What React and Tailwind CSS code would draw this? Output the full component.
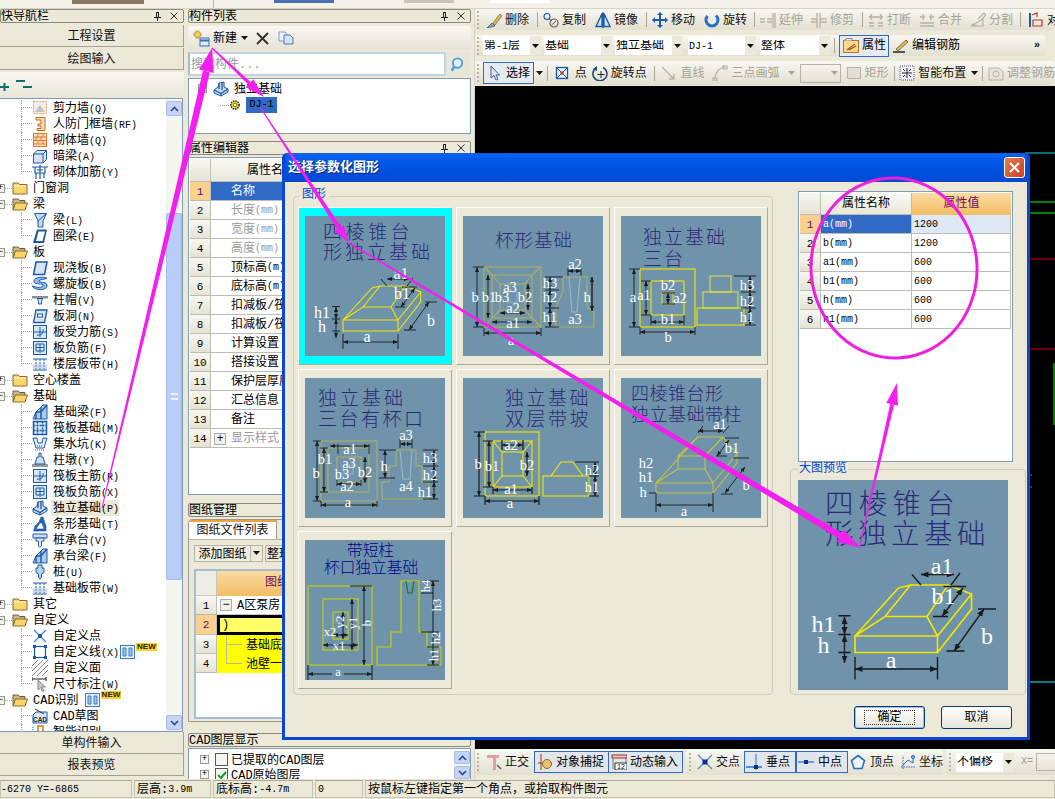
const BL = '#1c5aa6';
const GR = '#b5b3a6';

const ICONS = {
  shear: <><rect x="1.5" y="1.5" width="13" height="12" fill="#f4ede6" stroke="#dba474" strokeDasharray="2 1" /><path d="M3 12 L8 5 L13 12Z" fill="#c4c4c4" /></>,
  renfang: <path d="M4 1.5h9v13H5v-2h4v-2.5H6V8h3V4H4z" fill="#f8dcb4" stroke="#c46a1f" />,
  brick: <><rect x="1.5" y="1.5" width="13" height="13" fill="#f9dcc0" stroke="#e07b30" /><path d="M1.5 5H14.5M1.5 8.5H14.5M1.5 12H14.5M6 1.5V5M11 1.5V5M4 5V8.5M9 5V8.5M6 8.5V12M11 8.5V12" stroke="#e07b30" /></>,
  anliang: <><path d="M1.5 6 L5 2.5 H14.5 V11.5 L11 15 H1.5Z" fill="#d5e3f2" stroke={BL} /><path d="M1.5 6H11V15M11 6L14.5 2.5" stroke={BL} /></>,
  jiajin: <path d="M0 3H16M8 1V15M3 3V9H13V3M4 9V15M12 9V14M5 6H11" stroke={BL} strokeWidth="1.2" />,
  liang: <><path d="M2.5 1.5H14.5L11 9V15H6V9Z" fill="#c3d9f0" stroke={BL} /><path d="M6 9 L14 2" stroke={BL} /></>,
  quan: <path d="M5 1.5H15L12 15H1ZM6.5 3.5L4 13H10.5L13 3.5Z" fill={BL} fillRule="evenodd" />,
  xian: <path d="M4 2H15L12.5 14.5H1.5Z" fill="#d7e5f6" stroke={BL} strokeWidth="1.5" />,
  spiral: <path d="M15 2C8 0 1 2 2 6C3 9 11 7 11 9C11 12 5 12 0 10C3 15 16 15 15 9C14 5 6 7 7 5C8 3 12 4 15 2Z" fill="#8cbaec" stroke={BL} />,
  zhumao: <><path d="M0 4H16V6.5H0Z" fill="#8d8d8d" /><path d="M5.5 6.5H10.5L9.5 9.5V12H6.5V9.5Z" fill="#cfe0f5" stroke={BL} /></>,
  bandong: <><path d="M4 2H15L12.5 14.5H1.5Z" fill="#d7e5f6" stroke={BL} strokeWidth="1.3" /><rect x="5.5" y="6" width="5" height="3" fill="#fff" stroke={BL} /></>,
  bshou: <><rect x="1.5" y="1.5" width="13" height="13" fill="#d9e6f6" stroke={BL} /><path d="M2 8H14M8 3V13M11 5C12 9 9 12 5 11" stroke={BL} /></>,
  bfu: <><rect x="1.5" y="1.5" width="13" height="13" fill="#d9e6f6" stroke={BL} /><path d="M4 4H12V11H4ZM4 7.5H12M8 4V13" stroke={BL} /></>,
  band: <><path d="M1 3H15M1 14H15" stroke={BL} /><path d="M4 3V14M8 3V14M12 3V14" stroke={BL} strokeDasharray="2 1" /><rect x="1" y="8" width="14" height="6" fill="#9fb7d6" opacity=".5" /></>,
  jcliang: <><path d="M1 15 L4 8 L11 1 H15 V15Z" fill="#a9c8ea" stroke={BL} /><path d="M4 8V15M9 8V15M4 8H9L15 1M9 3V8" stroke={BL} strokeWidth="1.4" /></>,
  fabanji: <><rect x="1.5" y="1.5" width="13" height="13" fill="#d9e6f6" stroke={BL} strokeWidth="1.5" /><path d="M5.5 1.5V14.5M10.5 1.5V14.5M1.5 5.5H14.5M1.5 10.5H14.5" stroke={BL} strokeWidth="1.5" strokeDasharray="2 1" /></>,
  jishui: <><path d="M1 2H5L6 7H10L11 2H15L12 12H4Z" fill="#e3edf8" stroke={BL} /><path d="M3 14H13M5 10H11" stroke={BL} strokeDasharray="1 1" /></>,
  zhudun: <><path d="M0 12H16V15H0Z" fill="#999" /><path d="M7 1H9V5H11L13 12H3L5 5H7Z" fill="#cfe0f5" stroke={BL} /></>,
  duli: <><path d="M1 9L5 6L6 2L11 1L11 6L15 8V11L8 15L1 12Z" fill="#c5d9ef" stroke={BL} /><path d="M1 9L8 12.5L15 8M8 12.5V15M6 2V8M9 1.5V9" stroke={BL} strokeWidth="1.3" /></>,
  tiao: <path d="M1.5 15 L3 10 L7 6 L9 1 H11 L14 10 V15ZM4 13H12L10 7H8Z" fill="#2a66b0" fillRule="evenodd" stroke={BL} strokeWidth=".6" />,
  chengtai: <><path d="M1 2H15V6H1Z" fill="#cfe0f5" stroke={BL} /><path d="M4 6H12V9H9.5V14L8 15.5L6.5 14V9H4Z" fill="#e6eef8" stroke={BL} /></>,
  zhuang: <path d="M6 1H10V4H12V8.5L9.5 10V13L8 15L6.5 13V10L4 8.5V4H6Z" fill="#b6d0ee" stroke={BL} />,
  zpoint: <><path d="M2 2L14 14M14 2L2 14" stroke="#3c7fc9" strokeWidth="1.2" /><rect x="6" y="6" width="4" height="4" fill={BL} /></>,
  zline: <><rect x="2.5" y="2.5" width="11" height="11" stroke={BL} strokeWidth="1.2" /><path d="M1 1h3v3H1zM12 1h3v3h-3zM1 12h3v3H1zM12 12h3v3h-3z" fill={BL} /></>,
  zface: <path d="M0 6L6 0M0 11L11 0M0 16L16 0M5 16L16 5M10 16L16 10" stroke="#8a8a8a" />,
  zdim: <><path d="M0 3H14M0 1V5M14 1V5" stroke="#222" /><path d="M6 4V14L8.5 11.5L10.5 15.5L12 15L10 11H13.5Z" fill="#c9c9c9" stroke="#888" /></>,
  cad: <><path d="M1 15V7L4 4H15V15Z" fill="#dbe6f2" stroke={BL} /><path d="M3 1L12 6" stroke="#333" /><text x="8" y="13.5" fontSize="6.5" fontWeight="700" textAnchor="middle" fill="#222" fontFamily="Liberation Sans">CAD</text></>,
  smart: <><path d="M1 3V14" stroke={BL} strokeDasharray="1 1" /><path d="M5 7V14H12V7M6 2H11V8H6Z" stroke="#d27a1f" strokeWidth="1.5" /></>,
  gear: <><circle cx="8" cy="8" r="5.5" fill="#f5e33b" stroke="#222" strokeDasharray="2 1.2" strokeWidth="2" /><circle cx="8" cy="8" r="2.5" fill="#fff8a0" stroke="#444" /></>,
  search: <><circle cx="7" cy="6.5" r="5" fill="#dcefff" stroke="#4f9be0" strokeWidth="2" /><path d="M3.5 10.5L0.5 14.5" stroke="#4f9be0" strokeWidth="3" /></>,
  del: <><path d="M1 16 L6 11 L9 14Z" fill="#7fa8d8" stroke="#333" strokeWidth=".6" /><path d="M7 11 L14 2 L16 4 L9 13Z" fill="#e8b64a" stroke="#555" strokeWidth=".6" /></>,
  copyc: <><circle cx="4" cy="4.5" r="3" stroke={BL} strokeWidth="1.1" /><circle cx="11" cy="11" r="4" stroke="#555" strokeWidth="1.1" /><path d="M6 7L9 9M8.5 13L13 9" stroke="#555" /></>,
  mirror: <path d="M7 1.5L1 14.5H7ZM9 1.5L15 14.5H9ZM8 0V16" stroke={BL} strokeWidth="1.3" fill="#cfe0f5" />,
  move: <path d="M8 0L11 3H9V7H13V5L16 8L13 11V9H9V13H11L8 16L5 13H7V9H3V11L0 8L3 5V7H7V3H5Z" fill={BL} />,
  rotate: <path d="M12 3.5A6 6 0 1 1 3.5 4" stroke="#2a6fc4" strokeWidth="3" />,
  extend: <path d="M0 7H5M0 10H5M7 7H12M7 10H12M13 1V16M15 1V16" stroke={GR} strokeWidth="1.3" />,
  trim: <path d="M0 7H6M0 10H6M9 7H16M9 10H16M6 1V16M9 1V16" stroke={GR} strokeWidth="1.3" />,
  breakk: <path d="M1 11H6M1 14H6M10 11H15M10 14H15M1 5H15M4 2L2 5L4 8M12 2L14 5L12 8" stroke={GR} strokeWidth="1.3" />,
  merge: <path d="M1 11H15M1 14H15M1 5H6M10 5H15M4 2V8M12 2V8" stroke={GR} strokeWidth="1.3" />,
  split: <path d="M1 14H13L13 7L1 14ZM8 7L14 1L16 3L10 9M2 12L8 14" stroke={GR} strokeWidth="1.2" />,
  align: <><path d="M2 1V15" stroke={BL} strokeWidth="2" /><path d="M4 3L9 1V5M5 8H14V14H5Z" stroke="#c0392b" strokeWidth="1.2" /></>,
  attr: <><rect x="0.5" y="2.5" width="15" height="12" fill="#f9d88f" stroke="#b8752a" /><path d="M1 2.5L4 0.5H9V2.5" fill="#eee" stroke="#888" /><path d="M4 12L12 6M6 12L13 8" stroke="#a0622a" strokeWidth="1.4" /></>,
  rebar: <><path d="M0 14H12" stroke="#222" strokeWidth="1.5" /><path d="M3 11L13 2L15 4L5 13Z" fill="#e8b64a" stroke="#333" strokeWidth=".6" /></>,
  pointer: <path d="M4 1V13L7 10.5L9 15L11 14L9 10H12.5Z" fill="#dce6f3" stroke="#44648c" />,
  point: <><rect x="2.5" y="2.5" width="11" height="11" fill="#e8eef8" stroke={BL} strokeWidth="1.3" /><path d="M3 3L13 13M13 3L3 13" stroke={BL} /><rect x="6.5" y="6.5" width="3" height="3" fill="#d02a2a" /></>,
  rotpoint: <><path d="M4 3A7 7 0 1 0 11 2.5" stroke="#234a7c" strokeWidth="1.6" /><path d="M1 4L5 1V6Z" fill="#234a7c" /><path d="M9 6V13M5.5 9.5H12.5" stroke="#222" /></>,
  gline: <path d="M1 2L13 14M13 9V14H8" stroke={GR} strokeWidth="1.3" />,
  garc: <path d="M3 15C3 8 6 3 13 2M11 1H15V4H11ZM1 13H5V16H1Z" stroke={GR} strokeWidth="1.2" />,
  grect: <rect x="1.5" y="2.5" width="13" height="11" fill="#e2e0d4" stroke={GR} />,
  layout: <><rect x="1" y="1" width="14" height="14" fill="#eef" stroke="#556" strokeDasharray="1 1" /><path d="M8 3V13M3 8H13M4 4L6 6M12 4L10 6M4 12L6 10M12 12L10 10" stroke="#222" /></>,
  adjust: <><path d="M1 3H11L15 7V15H1Z" fill="#e6e4da" stroke={GR} /><circle cx="8" cy="9" r="3" stroke={GR} /></>,
  ortho: <><path d="M1 1H13V4H10V16H7V4H1Z" fill="#dca0a0" /><path d="M11 11L15 15" stroke="#556" strokeWidth="1.5" /></>,
  snap: <><path d="M4 0V16M1 9H15" stroke="#a2331e" /><circle cx="10" cy="10" r="4.5" fill="#e8c36e" stroke="#8a6d2a" /></>,
  dyn: <><rect x="1" y="1" width="15" height="3" fill="#d8d4c4" stroke="#a2331e" /><path d="M2 4V15M15 4V15" stroke="#777" /><rect x="4" y="9" width="12" height="7" fill="#fff" stroke="#333" /><text x="10" y="15" fontSize="6.5" textAnchor="middle" fill="#111" fontFamily="Liberation Mono">12</text></>,
  cross: <><path d="M1 1L15 15M15 1L1 15" stroke="#4f8fd8" strokeWidth="1.3" /><rect x="5.5" y="5.5" width="5" height="5" fill="#0c2f8c" /></>,
  perp: <><path d="M0 13H16" stroke="#4f8fd8" strokeWidth="2" /><path d="M10 0V16" stroke="#4f8fd8" strokeWidth="1.3" /><rect x="8" y="11" width="4" height="4" fill="#0c2f8c" /></>,
  mid: <><path d="M0 8H16" stroke="#6f9bd4" strokeWidth="2" /><rect x="6" y="6" width="4" height="4" fill="#0c2f8c" /></>,
  vert: <path d="M8 1.5L14.5 6.5L12 14.5H4L1.5 6.5Z" fill="#eef4fc" stroke="#2a6fc4" strokeWidth="1.6" />,
  coord: <><path d="M1 13H15M3 15V2" stroke="#2a6fc4" strokeDasharray="1.5 1" /><path d="M2 12L8 6L13 9V2" stroke="#2a6fc4" /><circle cx="13" cy="3" r="1.6" stroke="#2a6fc4" /></>,
};

const FolderIcon = ({ open }) => (
  <svg viewBox="0 0 16 14" width="16" height="14" className="shrink-0">
    {open ? (
      <>
        <path d="M1 2H6L7.5 3.5H13V12H1Z" fill="#c9b68a" stroke="#6d5c36" />
        <path d="M1 13L3.5 6H15.5L13 13Z" fill="#f7d36c" stroke="#8a6d2a" />
      </>
    ) : (
      <>
        <path d="M1 2H6L7.5 3.5H15V13H1Z" fill="#f7d66e" stroke="#8a6d2a" />
        <path d="M2 5H14" stroke="#fff3c0" />
      </>
    )}
  </svg>
);

const Ic = ({ n, s = 16 }) => (
  <svg viewBox="0 0 16 16" width={s} height={s} fill="none" className="shrink-0">
    {ICONS[n]}
  </svg>
);

const NewBadge = () => (
  <>
    <svg viewBox="0 0 15 14" width="15" height="14" className="shrink-0 ml-[1px]">
      <rect x="0.5" y="0.5" width="14" height="13" fill="#e6f0fb" stroke="#3d7cc9" />
      <path d="M3 3H6V11H3ZM9 3H12V11H9Z" stroke="#3d7cc9" fill="#9cc3ee" />
    </svg>
    <span className="self-start ml-[1px] mt-[-1px] bg-[#ffd21e] px-[1px] text-[8px] leading-[8px] font-bold text-[#222] font-['Liberation_Sans',sans-serif]">NEW</span>
  </>
);

const TREE = [
  { i: 'shear', t: '剪力墙', l: '(Q)' },
  { i: 'renfang', t: '人防门框墙', l: '(RF)' },
  { i: 'brick', t: '砌体墙', l: '(Q)' },
  { i: 'anliang', t: '暗梁', l: '(A)' },
  { i: 'jiajin', t: '砌体加筋', l: '(Y)', last: true },
  { root: true, t: '门窗洞' },
  { root: true, open: true, t: '梁' },
  { i: 'liang', t: '梁', l: '(L)' },
  { i: 'quan', t: '圈梁', l: '(E)', last: true },
  { root: true, open: true, t: '板' },
  { i: 'xian', t: '现浇板', l: '(B)' },
  { i: 'spiral', t: '螺旋板', l: '(B)' },
  { i: 'zhumao', t: '柱帽', l: '(V)' },
  { i: 'bandong', t: '板洞', l: '(N)' },
  { i: 'bshou', t: '板受力筋', l: '(S)' },
  { i: 'bfu', t: '板负筋', l: '(F)' },
  { i: 'band', t: '楼层板带', l: '(H)', last: true },
  { root: true, t: '空心楼盖' },
  { root: true, open: true, t: '基础' },
  { i: 'jcliang', t: '基础梁', l: '(F)' },
  { i: 'fabanji', t: '筏板基础', l: '(M)' },
  { i: 'jishui', t: '集水坑', l: '(K)' },
  { i: 'zhudun', t: '柱墩', l: '(Y)' },
  { i: 'bshou', t: '筏板主筋', l: '(R)' },
  { i: 'bfu', t: '筏板负筋', l: '(X)' },
  { i: 'duli', t: '独立基础', l: '(P)', sel: true },
  { i: 'tiao', t: '条形基础', l: '(T)' },
  { i: 'chengtai', t: '桩承台', l: '(V)' },
  { i: 'jcliang', t: '承台梁', l: '(F)' },
  { i: 'zhuang', t: '桩', l: '(U)' },
  { i: 'band', t: '基础板带', l: '(W)', last: true },
  { root: true, t: '其它' },
  { root: true, open: true, t: '自定义' },
  { i: 'zpoint', t: '自定义点' },
  { i: 'zline', t: '自定义线', l: '(X)', badge: true },
  { i: 'zface', t: '自定义面' },
  { i: 'zdim', t: '尺寸标注', l: '(W)', last: true },
  { root: true, open: true, t: 'CAD识别', badge: true },
  { i: 'cad', t: 'CAD草图' },
  { i: 'smart', t: '智能识别' },
];

const L = ({ children }) => <span className="text-[10px]">{children}</span>;

const PlusBox = ({ open, className = '' }) => (
  <span className={`flex items-center justify-center w-[9px] h-[9px] border border-[#9a9a8c] bg-[#f5f4ee] text-[9px] leading-none shrink-0 ${className}`}>
    {open ? '−' : '+'}
  </span>
);

const TreeRow = ({ row }) => {
  if (row.root) {
    return (
      <div className="flex items-center h-4">
        <PlusBox open={row.open} className="ml-[-4px]" />
        <span className="w-[7px] border-b border-dotted border-gray-400" />
        <FolderIcon open={row.open} />
        <span className="ml-[5px] whitespace-nowrap translate-y-px">{row.t}</span>
        {row.badge && <span className="ml-[5px] flex h-4 items-center"><NewBadge /></span>}
      </div>
    );
  }
  return (
    <div className="flex items-center h-4">
      <div className="w-[21px] shrink-0" />
      <div className="w-[11px] h-4 shrink-0 border-dotted border-gray-400">
        <div className="h-2 border-l border-b border-dotted border-gray-400" />
        {!row.last && <div className="h-2 border-l border-dotted border-gray-400" />}
      </div>
      <Ic n={row.i} />
      <span className={`ml-[3px] pl-[2px] h-4 leading-[18px] whitespace-nowrap ${row.sel ? 'bg-[#ece9d8]' : ''}`}>
        {row.t}<L>{row.l}</L>
      </span>
      {row.badge && <NewBadge />}
    </div>
  );
};

const PanelHead = ({ title, close = true }) => (
  <div className="flex items-center h-[14px] border border-[#8b8a7c] rounded-[2px] leading-[12px] overflow-hidden">
    <span className="flex-1 whitespace-nowrap translate-y-px">{title}</span>
    {close && (
      <span className="flex items-center gap-[8px] pr-[5px]">
        <svg viewBox="0 0 8 9" width="8" height="9"><path d="M2 0V5H0V6H3V9H4V6H7V5H5V0ZM3 1H4V5H3Z" fill="#222" /></svg>
        <svg viewBox="0 0 8 8" width="8" height="8"><path d="M0.5 0.5L7.5 7.5M7.5 0.5L0.5 7.5" stroke="#333" /></svg>
      </span>
    )}
  </div>
);

const NavBtn = ({ children }) => (
  <button className="flex items-center justify-center w-full h-[22px] pt-[3px] bg-[#ece9d8] border-b border-r border-[#a5a294] text-[#111]">
    {children}
  </button>
);

const Caret = ({ c = '#111' }) => (
  <svg viewBox="0 0 7 4" width="7" height="4" className="shrink-0"><path d="M0 0H7L3.5 4Z" fill={c} /></svg>
);

const Grip = () => (
  <span className="flex flex-col gap-[2px] w-[2px] mr-[5px] shrink-0">
    {[0, 1, 2, 3, 4].map((i) => <span key={i} className="w-[2px] h-[2px] bg-[#b8b5a5]" />)}
  </span>
);

const Sep = () => <span className="w-px h-[15px] ml-px mr-[5px] bg-[#aca899] shrink-0" />;

const Tool = ({ icon, label, className = '', off }) => (
  <span className={`flex items-center gap-[3px] shrink-0 whitespace-nowrap ${off ? 'text-[#a5a398]' : 'text-[#111]'} ${className}`}>
    <Ic n={icon} />
    <span className="translate-y-px">{label}</span>
  </span>
);

const ToolRow = ({ className = '', children }) => (
  <div className={`flex items-center rounded-[3px] bg-linear-to-b from-[#f8f7f2] to-[#e3e0d0] pl-[2px] ${className}`}>
    {children}
  </div>
);

const Combo = ({ label, className = '' }) => (
  <span className={`flex items-center h-[19px] bg-white shrink-0 ${className}`}>
    <span className="flex-1 whitespace-nowrap overflow-hidden pl-[1px]">{label}</span>
    <span className="flex items-center justify-center w-[11px] h-[19px] bg-[#ebe9dc]"><Caret /></span>
  </span>
);

const PROPS = [
  ['名称'], ['长度(mm)', 1], ['宽度(mm)', 1], ['高度(mm)', 1], ['顶标高(m)'], ['底标高(m)'], ['扣减板/筏板'],
  ['扣减板/筏板'], ['计算设置'], ['搭接设置'], ['保护层厚度'], ['汇总信息'], ['备注'], ['显示样式', 1],
];

const NumCell = ({ n, active }) => (
  <div className={`flex items-center justify-center w-[21px] shrink-0 pt-[2px] border-r border-b border-[#bdbdb4] ${active ? 'bg-[#fbd08f] text-[#5a0f6e]' : 'bg-linear-to-b from-[#f8f7f2] to-[#e6e3d4]'} text-[11px]`}>
    {n}
  </div>
);

const PropTable = () => (
  <div className="h-[338px] mt-[2px] border border-[#7f9db9] bg-white overflow-hidden">
    <div className="flex h-[23px] m-px mb-0">
      <div className="w-[21px] border-r border-b border-[#bdbdb4] bg-linear-to-b from-[#f8f7f2] to-[#e6e3d4]" />
      <div className="flex-1 pl-[36px] leading-[24px] border-b border-[#bdbdb4] bg-linear-to-b from-[#fafaf6] to-[#e9e7d9]">属性名称</div>
    </div>
    {PROPS.map(([name, dim], i) => (
      <div key={i} className="flex h-[19px] ml-px">
        <NumCell n={i + 1} active={i === 0} />
        <div className={`flex-1 flex items-center border-b border-[#bdbdb4] pt-[2px] whitespace-nowrap ${i === 13 ? 'pl-[3px]' : 'pl-[20px]'} ${i === 0 ? 'bg-[#316ac5] text-white' : ''} ${dim ? 'text-[#9a9a9a]' : ''}`}>
          {i === 13 && <span className="flex items-center justify-center w-[12px] h-[12px] mr-[5px] border border-[#aaa] bg-[#f2f1ea] text-[#111]">+</span>}
          {name.includes('(') ? <>{name.split('(')[0]}<L>({name.split('(')[1]}</L></> : name}
        </div>
      </div>
    ))}
  </div>
);

const DrawingGrid = () => (
  <div className="h-[203px] shrink-0 flex flex-col mt-[2px] border border-[#9d9b8d] rounded-t-[4px] overflow-hidden">
    <div className="flex h-[20px] shrink-0 border-b border-[#b5b3a5]">
      <div className="w-[88px] bg-white border-t-2 border-[#f2a23c] border-r border-r-[#9d9b8d] text-center leading-[18px] text-[#111]">图纸文件列表</div>
    </div>
    <div className="flex items-center h-[18px] shrink-0 mt-[4px] ml-[5px]">
      <span className="w-[57px] h-[17px] leading-[18px] text-center border border-[#b5b3a5] bg-[#f0eee3]">添加图纸</span>
      <span className="flex items-center justify-center w-[12px] h-[17px] border-y border-r border-[#b5b3a5]"><Caret /></span>
      <span className="ml-[2px] pl-[1px] h-[17px] leading-[18px] border border-[#b5b3a5] whitespace-nowrap">整理图纸</span>
    </div>
    <div className="flex-1 mx-[5px] mt-[7px] mb-[2px] border-2 border-[#a6bdd4] bg-white overflow-hidden">
      <div className="flex h-[25px]">
        <div className="w-[21px] bg-[#efeee6] border-r border-b border-[#c9c8bd]" />
        <div className="flex-1 pl-[48px] leading-[25px] text-[#6b0f5e] bg-linear-to-b from-[#fddba0] to-[#f2bd65] whitespace-nowrap">图纸名称</div>
      </div>
      <div className="flex h-[19px]">
        <NumCell n={1} />
        <div className="flex-1 flex items-center pl-[3px] whitespace-nowrap border-b border-[#c9c8bd]">
          <span className="flex items-center justify-center w-[12px] h-[12px] mr-[5px] border border-[#aaa] bg-[#f2f1ea]">−</span>
          <span className="translate-y-px">A区泵房.dwg</span>
        </div>
      </div>
      <div className="flex h-[20px]">
        <NumCell n={2} active />
        <div className="flex-1 bg-[#ffff66] border-[3px] border-black leading-[15px] pl-[2px]">)</div>
      </div>
      {['基础底板配筋', '池壁一配筋'].map((t, i) => (
        <div key={t} className="flex h-[19px]">
          <NumCell n={i + 3} />
          <div className="flex-1 flex items-center bg-[#ffff00] whitespace-nowrap">
            <div className="w-[9px] shrink-0" />
            <div className="w-[16px] h-full shrink-0">
              <div className="h-[10px] border-l border-b border-[#b9b9a0]" />
              {i === 0 && <div className="h-[9px] border-l border-[#b9b9a0]" />}
            </div>
            <span className="ml-[4px] translate-y-px">{t}</span>
          </div>
        </div>
      ))}
    </div>
  </div>
);

/* drawings for the parameter thumbnails, all in a 140 box */
const W = ({ x, y, r, s = 14.5, children }) => (
  <text x={x} y={y} fontSize={s} fill="#fff" fontFamily="Liberation Serif" textAnchor="middle" dominantBaseline="central" transform={r ? `rotate(-90 ${x} ${y})` : undefined}>{children}</text>
);
const Title = ({ x, y, size = 19, sp = 2, c = '#2c2a78', children }) => (
  <text x={x} y={y - 1.5} fontSize={size} letterSpacing={sp} fill={c} fontFamily="Noto Sans CJK SC" dominantBaseline="central" fontWeight="300">{children}</text>
);
const Dm = ({ a, b, c, d, w = 0.9 }) => (
  <line x1={a} y1={b} x2={c} y2={d} stroke="#1b1b1b" strokeWidth={w} markerStart="url(#ah)" markerEnd="url(#ah)" />
);
const Tk = ({ d, w = 0.9 }) => <path d={d} stroke="#1b1b1b" strokeWidth={w} fill="none" />;
const Yl = ({ d, c = '#f4e600', w = 1.1 }) => <path d={d} stroke={c} strokeWidth={w} fill="none" />;
const Rc = ({ a, b, c, d, col = '#f4e600', w = 1.1, op = 1 }) => (
  <rect x={a} y={b} width={c - a} height={d - b} stroke={col} strokeWidth={w} fill="none" opacity={op} />
);

const Thumb1 = () => (
  <>
    <Title x={18} y={16} sp={3.5}>四棱锥台</Title>
    <Title x={18} y={36} sp={3}>形独立基础</Title>
    <Yl d="M38 104H93V115H38ZM38 104L67 72L75 70H100L115.7 76V86L93 115M93 104L115.7 76M38 104L58 91H86L93 104M58 91L75 70M86 91L100 70" />
    <Tk d="M38 118V133M93 118V133M27 90.5H35M27 103H35M27 115H35M82 70L76 63M102 70L108 62M97 71H112M90 91H100M99 114H111M120 86H132" />
    <Dm a={38} b={126} c={93} d={126} />
    <Dm a={31} b={91} c={31} d={103} />
    <Dm a={31} b={103} c={31} d={122} />
    <Dm a={82} b={63} c={104} d={63} />
    <Dm a={110} b={72} c={96} d={91} />
    <Dm a={124} b={86} c={104} d={114} />
    <W s={16} x={62} y={120}>a</W><W s={16} x={17} y={96}>h1</W><W s={16} x={17} y={110}>h</W><W s={16} x={96} y={57}>a1</W><W s={16} x={97} y={77}>b1</W><W s={16} x={126} y={104}>b</W>
  </>
);

const Thumb2 = () => {
  const c = '#aeb060';
  return (
    <>
      <Title x={32} y={24} size={18.5} sp={1}>杯形基础</Title>
      <Rc a={21} b={51} c={78} d={111} col={c} /><Rc a={29} b={59} c={69} d={102} col={c} /><Rc a={37} b={68} c={62} d={94} col={c} /><Rc a={45} b={76} c={54} d={86} col="#8fb0b8" />
      <Yl c={c} d="M21 51L29 59M78 51L69 59M21 111L29 102M78 111L69 102M29 59L37 68M69 59L62 68M29 102L37 94M69 102L62 94" />
      <Yl c={c} d="M100 61H124V91L131 96V111H93V91L100 76Z" />
      <Yl c="#9db8bd" d="M106 61L109 96H114L117 61" />
      <Tk d="M10 51H21M10 111H21M21 112V120M78 112V120M82 61H100M82 74H96M82 92H96M82 111H96M105 52V60M118 52V60M129 61V95" />
      <Dm a={14} b={51} c={14} d={111} /><Dm a={25} b={59} c={25} d={102} /><Dm a={21} b={117} c={78} d={117} /><Dm a={29} b={106} c={69} d={106} /><Dm a={37} b={97} c={62} d={97} /><Dm a={65} b={68} c={65} d={94} />
      <Dm a={87} b={61} c={87} d={74} /><Dm a={87} b={74} c={87} d={92} /><Dm a={87} b={92} c={87} d={111} /><Dm a={105} b={55} c={118} d={55} /><Dm a={129} b={61} c={129} d={95} />
      <W x={12} y={81}>b</W><W x={26} y={81}>b1</W><W x={39} y={81}>b3</W><W x={62} y={81}>b2</W><W x={47} y={71}>a3</W><W x={50} y={92}>a2</W><W x={50} y={107}>a1</W><W x={48} y={124}>a</W>
      <W x={87} y={67}>h3</W><W x={87} y={81}>h2</W><W x={87} y={101}>h1</W><W x={112} y={48}>a2</W><W x={112} y={103}>a3</W><W x={124} y={81}>h</W>
    </>
  );
};

const Thumb3 = () => (
  <>
    <Title x={22} y={21} sp={2}>独立基础</Title>
    <Title x={22} y={43} sp={2}>三台</Title>
    <Rc a={19} b={53} c={74} d={111} /><Rc a={30} b={65} c={63} d={99} /><Rc a={41} b={77} c={52} d={88} col="#d8d830" />
    <Rc a={76} b={92} c={123} d={109} /><Rc a={82} b={76} c={117} d={92} col="#dcdc40" /><Rc a={89} b={60} c={110} d={76} col="#dcdc40" />
    <Tk d="M8 53H19M8 111H19M19 111V119M74 111V119M30 99V109M63 99V109M20 65H30M20 99H30M113 60H135M120 76H135M120 92H135M124 109H135M41 77H54M41 88H54" />
    <Dm a={13} b={53} c={13} d={111} /><Dm a={25} b={65} c={25} d={99} /><Dm a={19} b={116} c={74} d={116} /><Dm a={30} b={106} c={63} d={106} /><Dm a={129} b={60} c={129} d={76} /><Dm a={129} b={76} c={129} d={92} /><Dm a={129} b={92} c={129} d={109} /><Dm a={47} b={77} c={47} d={88} />
    <W x={12} y={81}>a</W><W x={23} y={79}>a1</W><W x={47} y={69}>b2</W><W x={59} y={82}>a2</W><W x={47} y={103}>b1</W><W x={47} y={121}>b</W><W x={126} y={69}>h3</W><W x={126} y={85}>h2</W><W x={126} y={101}>h1</W>
  </>
);

const Thumb4 = () => {
  const c = '#aeb060';
  return (
    <>
      <Title x={13} y={20} sp={3}>独立基础</Title>
      <Title x={13} y={41} sp={2.5}>三台有杯口</Title>
      <Rc a={16} b={63} c={72} d={123} col={c} /><Rc a={23} b={70} c={64} d={114} col={c} /><Rc a={32} b={79} c={56} d={105} col={c} /><Rc a={39} b={87} c={48} d={96} col="#8fb0b8" />
      <Yl c={c} d="M91 72H111V88H117V104H124V121H77V104H84V88H91Z" />
      <Yl c="#9db8bd" d="M95 72L98 101H105L107 72" />
      <Tk d="M8 63H16M8 123H16M16 123V129M72 123V129M15 70H23M15 114H23M33 66V76M64 66V76M74 72H91M74 100H90M118 72H133M118 88H133M118 104H133M118 121H133M95 60V70M107 60V70M32 102V108M56 102V108" />
      <Dm a={12} b={63} c={12} d={123} /><Dm a={19} b={70} c={19} d={114} /><Dm a={16} b={127} c={72} d={127} /><Dm a={25} b={68} c={64} d={68} /><Dm a={32} b={106} c={56} d={106} /><Dm a={60} b={79} c={60} d={105} /><Dm a={80} b={72} c={80} d={100} /><Dm a={95} b={66} c={107} d={66} /><Dm a={129} b={72} c={129} d={88} /><Dm a={129} b={88} c={129} d={104} /><Dm a={129} b={104} c={129} d={121} />
      <W x={11} y={95}>b</W><W x={20} y={81}>b1</W><W x={45} y={71}>a1</W><W x={44} y={85}>a3</W><W x={37} y={96}>b3</W><W x={60} y={94}>b2</W><W x={42} y={108}>a2</W><W x={43} y={124}>a</W>
      <W x={101} y={57}>a3</W><W x={79} y={88}>h</W><W x={125} y={80}>h3</W><W x={125} y={97}>h2</W><W x={120} y={114}>h1</W><W x={101} y={108}>a4</W>
    </>
  );
};

const Thumb5 = () => (
  <>
    <Title x={42} y={20} sp={2.5}>独立基础</Title>
    <Title x={42} y={41} sp={2.5}>双层带坡</Title>
    <Rc a={22} b={54} c={76} d={118} /><Rc a={30} b={63} c={69} d={109} /><Rc a={39} b={74} c={60} d={98} />
    <Yl d="M30 63L39 74M69 63L60 74M30 109L39 98M69 109L60 98" />
    <Rc a={80} b={98} c={126} d={118} />
    <Yl d="M88 98L98 84H110L120 98" />
    <Tk w={1.2} d="M11 54H22M11 118H22M22 118V127M76 118V127M20 63H30M20 109H30M30 109V116M69 109V116M39 62V72M60 62V72M112 84H136M126 98H136M126 118H136" />
    <Dm w={1.2} a={16} b={54} c={16} d={118} /><Dm w={1.2} a={26} b={63} c={26} d={109} /><Dm w={1.2} a={22} b={123} c={76} d={123} /><Dm w={1.2} a={30} b={112} c={69} d={112} /><Dm w={1.2} a={64} b={74} c={64} d={98} /><Dm w={1.2} a={39} b={67} c={60} d={67} /><Dm w={1.2} a={132} b={84} c={132} d={98} /><Dm w={1.2} a={132} b={98} c={132} d={118} />
    <W x={15} y={86}>b</W><W x={29} y={88}>b1</W><W x={48} y={67}>a2</W><W x={64} y={87}>b2</W><W x={48} y={111}>a1</W><W x={47} y={125}>a</W><W x={129} y={92}>h2</W><W x={129} y={109}>h1</W>
  </>
);

const Thumb6 = () => {
  const c = '#c4c440';
  return (
    <>
      <Title x={10} y={15} size={18} sp={0.5}>四棱锥台形</Title>
      <Title x={10} y={36} size={18} sp={0.5}>独立基础带柱</Title>
      <Yl c={c} d="M35 105H92V115H35ZM35 105L77 59H102L116 76V85L92 115M92 105L116 76M57 78H84V91H57ZM57 91L35 105M84 91L92 105M57 78L77 59M84 78L102 59" />
      <Tk d="M35 115V134M92 115V134M28 115H35M77 55L82 48M102 55L108 48M104 60H118M95 78H106M112 80H128M100 116H112" />
      <Dm a={35} b={127} c={92} d={127} /><Dm a={77} b={53} c={102} d={53} /><Dm a={108} b={62} c={96} d={78} /><Dm a={124} b={89} c={104} d={115} />
      <W x={63} y={133}>a</W><W x={22} y={114}>h</W><W x={25} y={99}>h1</W><W x={25} y={85}>h2</W><W x={99} y={46}>a1</W><W x={111} y={70}>b1</W><W x={125} y={107}>b</W>
    </>
  );
};

const Thumb7 = () => {
  const c = '#d0d000';
  return (
    <>
      <Title x={42} y={11} size={15.7} sp={0} c="#00008b">带短柱</Title>
      <Title x={19} y={28} size={15.7} sp={0} c="#00008b">杯口独立基础</Title>
      <Rc a={3} b={46} c={67} d={125} col={c} /><Rc a={18} b={59} c={53} d={110} col={c} /><Rc a={28} b={72} c={43} d={99} col={c} />
      <Yl c={c} d="M96 41H114V92H122V107H136V125H72V107H86V92H96Z" />
      <Yl c="#0f7a1e" d="M101 41L103 53H107L109 41" />
      <Tk w={1} d="M3 125V140M67 125V140M45 46H67M120 41H134M116 53H128M116 92H134M122 107H134M122 125H134" />
      <Dm w={1} a={128} b={41} c={128} d={125} /><Dm w={1} a={3} b={134} c={67} d={134} /><Dm w={1} a={59} b={46} c={59} d={125} /><Dm w={1} a={47} b={59} c={47} d={110} /><Dm w={1} a={18} b={105} c={53} d={105} /><Dm w={1} a={38} b={72} c={38} d={99} /><Dm w={1} a={28} b={95} c={43} d={95} />
      <rect x={27} y={128} width={12} height={10} fill="#6f93aa" />
      <W s={12.5} x={33} y={132}>a</W><W s={12.5} x={25} y={92}>x2</W><W s={12.5} x={34} y={106}>x1</W>
      <W s={12.5} r x={35} y={82}>y2</W><W s={12.5} r x={48} y={83}>y1</W><W s={12.5} r x={62} y={83}>b</W><W s={12.5} r x={121} y={46}>h4</W><W s={12.5} r x={132} y={65}>h3</W><W s={12.5} r x={131} y={98}>h2</W><W s={12.5} r x={129} y={115}>h1</W>
    </>
  );
};

const Pic = ({ className, children }) => (
  <svg viewBox="0 0 140 140" className={`block bg-[#6f93aa] ${className}`}>
    <defs>
      <marker id="ah" markerUnits="userSpaceOnUse" markerWidth="5" markerHeight="4" refX="5" refY="2" orient="auto-start-reverse">
        <path d="M0 0L5 2L0 4Z" fill="#1b1b1b" />
      </marker>
    </defs>
    {children}
  </svg>
);

const CARDS = [Thumb1, Thumb2, Thumb3, Thumb4, Thumb5, Thumb6, Thumb7];

const DIALOG_ROWS = [['a', '1200'], ['b', '1200'], ['a1', '600'], ['b1', '600'], ['h', '600'], ['h1', '600']];

const Dialog = () => (
  <div className="absolute left-[282px] top-[153px] w-[748px] h-[587px] flex flex-col bg-[#0a47d6] rounded-t-[5px] px-[3px] pb-[3px]">
    <div className="flex items-center justify-between h-[29px] shrink-0 pl-[3px] pr-[2px] rounded-t-[5px] bg-linear-to-b from-[#0a62ee] via-[#0052e2] to-[#0349d2]">
      <span className="text-[13px] font-bold text-white [text-shadow:1px_1px_0_#0a2a7c]">选择参数化图形</span>
      <span className="flex items-center justify-center w-[21px] h-[21px] rounded-[3px] border border-white bg-linear-to-br from-[#e87a55] to-[#c8401c]">
        <svg viewBox="0 0 11 11" width="11" height="11"><path d="M1 1L10 10M10 1L1 10" stroke="#fff" strokeWidth="2" /></svg>
      </span>
    </div>
    <div className="flex flex-1 bg-[#ece9d8] pl-[8px] pt-[14px]">
      <div className="w-[480px] h-[499px] border border-[#d0cebf] rounded-[4px] pl-[4px] shrink-0">
        <div className="-mt-[8px] ml-px w-fit px-[3px] h-[12px] leading-[13px] bg-[#ece9d8] text-[#0046d5]">图形</div>
        <div className="grid grid-cols-[154px_154px_154px] gap-[4px] mt-[6px]">
          {CARDS.map((C, i) => (
            <div key={i} className={`w-[154px] h-[158px] pl-[6px] pt-[8px] border border-b-[#aca899] border-r-[#aca899] border-t-white border-l-white ${i === 0 ? 'bg-[#00ffff]' : ''}`}>
              <Pic className="w-[140px] h-[140px]"><C /></Pic>
            </div>
          ))}
        </div>
      </div>
      <div className="ml-[17px] flex flex-col w-[236px]">
        <div className="ml-[8px] -mt-[5px] w-[215px] h-[271px] border border-[#7f9db9] bg-white p-px">
          <div className="flex h-[22px]">
            <div className="w-[21px] border-r border-b border-[#bdbdb4] bg-linear-to-b from-[#f8f7f2] to-[#e6e3d4]" />
            <div className="w-[91px] text-center leading-[23px] border-r border-b border-[#bdbdb4] bg-linear-to-b from-[#fafaf6] to-[#e9e7d9]">属性名称</div>
            <div className="w-[99px] text-center leading-[23px] text-[#6b0f5e] bg-linear-to-b from-[#fddba0] to-[#f2bd65]">属性值</div>
          </div>
          {DIALOG_ROWS.map(([n, v], i) => (
            <div key={n} className="flex h-[19px]">
              <NumCell n={i + 1} active={i === 0} />
              <div className={`w-[91px] flex items-center pl-[2px] pt-[2px] border-r border-b border-[#bdbdb4] text-[10px] ${i === 0 ? 'bg-[#316ac5] text-white' : ''}`}>{n}(mm)</div>
              <div className={`w-[99px] flex items-center pl-[2px] pt-[2px] border-r border-b border-[#bdbdb4] text-[10px] ${i === 0 ? 'bg-[#dfe8f5]' : ''}`}>{v}</div>
            </div>
          ))}
        </div>
        <div className="mt-[7px] w-[236px] h-[226px] border border-[#d0cebf] rounded-[4px] pl-[7px] shrink-0">
          <div className="-mt-[7px] w-fit px-px h-[12px] leading-[13px] bg-[#ece9d8] text-[#0046d5]">大图预览</div>
          <Pic className="w-[210px] h-[210px] mt-[5px]"><Thumb1 /></Pic>
        </div>
        <div className="flex mt-[11px] ml-[64px] gap-[16px]">
          <button className="flex items-center justify-center w-[71px] h-[23px] rounded-[3px] border border-[#003c74] bg-linear-to-b from-white to-[#e6e4da] shadow-[inset_0_0_0_1px_#9dbce8]">
            <span className="px-[12px] pt-px outline-1 outline-dotted outline-[#333]">确定</span>
          </button>
          <button className="w-[71px] h-[23px] pt-px rounded-[3px] border border-[#003c74] bg-linear-to-b from-white to-[#e6e4da]">取消</button>
        </div>
      </div>
    </div>
  </div>
);

const Arrow = ({ from, to, w1, w2, hl, hw }) => {
  const [x1, y1] = from;
  const [x2, y2] = to;
  const len = Math.hypot(x2 - x1, y2 - y1);
  const ux = (x2 - x1) / len;
  const uy = (y2 - y1) / len;
  const nx = -uy;
  const ny = ux;
  const bx = x2 - ux * hl;
  const by = y2 - uy * hl;
  const shaft = [
    [x1 + (nx * w1) / 2, y1 + (ny * w1) / 2],
    [bx + (nx * w2) / 2, by + (ny * w2) / 2],
    [bx - (nx * w2) / 2, by - (ny * w2) / 2],
    [x1 - (nx * w1) / 2, y1 - (ny * w1) / 2],
  ];
  const head = [[x2, y2], [bx + (nx * hw) / 2, by + (ny * hw) / 2], [bx - (nx * hw) / 2, by - (ny * hw) / 2]];
  const pts = (a) => a.map((p) => p.join(',')).join(' ');
  return (
    <>
      <polygon points={pts(shaft)} fill="#f31fee" />
      <polygon points={pts(head)} fill="#f31fee" />
    </>
  );
};

const Annotations = () => (
  <svg className="absolute left-0 top-0 w-[1055px] h-[799px] pointer-events-none" viewBox="0 0 1055 799">
    <Arrow from={[102, 508]} to={[212, 48]} w1={1} w2={7} hl={24} hw={15} />
    <Arrow from={[212, 48]} to={[264, 97]} w1={1.5} w2={3.5} hl={20} hw={11} />
    <Arrow from={[260, 107]} to={[349, 243]} w1={1} w2={4.5} hl={18} hw={11} />
    <Arrow from={[349, 243]} to={[861, 548]} w1={1.5} w2={6.5} hl={24} hw={14} />
    <Arrow from={[860, 545]} to={[897, 383]} w1={1} w2={4} hl={22} hw={12} />
    <ellipse cx="894" cy="268" rx="83" ry="90" fill="none" stroke="#f01fe0" strokeWidth="3" transform="rotate(-4 894 268)" />
  </svg>
);

const StatusCell = ({ className, children }) => (
  <div className={`flex items-center h-[18px] px-[2px] pt-px border border-[#c5c2b2] border-t-[#aca899] whitespace-nowrap overflow-hidden shrink-0 ${className}`}>
    {children}
  </div>
);

const App = () => (
  <div className="relative w-[1055px] h-[799px] overflow-hidden bg-[#ece9d8] text-[12px] leading-none text-black font-['Liberation_Mono','Noto_Sans_CJK_SC',monospace]">
    {/* scraps of the main tool bar at the very top */}
    <div className="flex h-[9px] bg-[#f4f2e8] border-b border-[#d8d5c4]">
      <div className="w-[72px]" />
      <div className="w-[72px] h-[4px] bg-[#8a7a60]" />
      <div className="w-[70px] border-r border-[#bbb8a8]" />
      <div className="w-[60px]" />
      <div className="w-[60px] h-[3px] bg-[#4a6fb0]" />
      <div className="w-[70px]" />
      <div className="w-[50px] h-[3px] bg-[#c8c6b8]" />
      <div className="w-[36px]" />
      <div className="w-[60px] h-[3px] bg-white" />
    </div>

    <div className="flex h-[770px]">
      {/* left nav */}
      <div className="w-[184px] shrink-0 flex flex-col">
        <PanelHead title="快导航栏" />
        <div className="mt-[2px]"><NavBtn>工程设置</NavBtn></div>
        <div className="mt-px"><NavBtn>绘图输入</NavBtn></div>
        <div className="flex items-center h-[26px] mt-[2px] bg-linear-to-b from-[#f9f8f3] to-[#e9e6d7]">
          <svg viewBox="0 0 34 14" width="34" height="14"><path d="M0 9H9M4.5 5V13" stroke="#0d6e6e" strokeWidth="2" /><path d="M16 3H25M23 9H32" stroke="#0d6e6e" strokeWidth="2" /></svg>
        </div>
        <div className="flex h-[634px] w-[183px] border-t border-b border-r border-[#7f9db9] bg-white">
          <div className="flex-1 overflow-hidden pt-px">
            {TREE.map((row, i) => <TreeRow key={i} row={row} />)}
          </div>
          <div className="w-[16px] flex flex-col bg-[#f6f5ef] pt-[2px]">
            <div className="flex items-center justify-center h-[15px] rounded-[2px] bg-[#c5d5f7] border border-[#a8bce8]">
              <svg viewBox="0 0 9 6" width="9" height="6"><path d="M1 5L4.5 1.5L8 5" stroke="#2c4c8c" strokeWidth="1.6" fill="none" /></svg>
            </div>
            <div className="h-[97px]" />
            <div className="flex items-center justify-center h-[367px] rounded-[2px] bg-[#b8cdf7] border border-[#a3bbec]">
              <span className="w-[7px] h-[7px] border-y-2 border-[#eef3fe]" />
            </div>
            <div className="flex-1" />
            <div className="flex items-center justify-center h-[15px] mb-px rounded-[2px] bg-[#c5d5f7] border border-[#a8bce8]">
              <svg viewBox="0 0 9 6" width="9" height="6"><path d="M1 1L4.5 4.5L8 1" stroke="#2c4c8c" strokeWidth="1.6" fill="none" /></svg>
            </div>
          </div>
        </div>
        <NavBtn>单构件输入</NavBtn>
        <NavBtn>报表预览</NavBtn>
      </div>

      {/* component list column */}
      <div className="w-[291px] shrink-0 flex flex-col pl-[4px] pr-[3px] border-r border-[#d8d5c4]">
        <PanelHead title="构件列表" />
        <div className="flex items-center h-[24px] mt-[3px] pl-[4px] rounded-[3px] bg-linear-to-b from-[#f9f8f3] to-[#e6e3d4]">
          <svg viewBox="0 0 18 18" width="18" height="18" className="shrink-0">
            <path d="M2 4H4V2H7V4H9V7H7V9H4V7H2Z" fill="#f5d560" stroke="#a08030" strokeWidth=".7" />
            <rect x="8" y="9" width="9" height="8" fill="#dde9f6" stroke="#3c6fb0" />
            <path d="M8 11.5H17" stroke="#3c6fb0" strokeWidth="2" />
          </svg>
          <span className="ml-[3px] translate-y-px">新建</span>
          <span className="ml-[4px]"><Caret /></span>
          <svg viewBox="0 0 13 13" width="13" height="13" className="ml-[8px]"><path d="M1 1L12 12M12 1L1 12" stroke="#333" strokeWidth="2" /></svg>
          <svg viewBox="0 0 16 14" width="16" height="14" className="ml-[9px]"><path d="M1 1H7L9 3V10H1Z" fill="#eef3fa" stroke="#7c9cc7" /><path d="M6 4H12L15 7V13H6Z" fill="#d5e3f5" stroke="#4c79b6" /></svg>
        </div>
        <div className="flex h-[24px] mt-[2px]">
          <div className="flex-1 border-2 border-[#c4d3e2] border-l-[#aabbcc] bg-white pl-[1px] leading-[22px] text-[#9a9a9a]">搜索构件...</div>
          <div className="flex items-center justify-center w-[25px] bg-[#e8e6d8]"><Ic n="search" s={15} /></div>
        </div>
        <div className="h-[56px] mt-[2px] border border-[#7f9db9] bg-white">
          <div className="flex items-center h-[17px] mt-[1px] pl-[9px]">
            <PlusBox open />
            <span className="ml-[6px]"><Ic n="duli" /></span>
            <span className="ml-[5px] translate-y-px">独立基础</span>
          </div>
          <div className="flex items-center h-[16px]">
            <div className="w-[30px] h-[12px] ml-[1px] shrink-0" />
            <span className="w-[9px] border-b border-dotted border-gray-400" />
            <Ic n="gear" s={12} />
            <span className="ml-[5px] h-[16px] w-[31px] bg-[#316ac5] text-[10px] leading-[16px] text-center">DJ-1</span>
          </div>
        </div>
        <div className="mt-[7px]"><PanelHead title="属性编辑器" /></div>
        <PropTable />
        <div className="mt-[8px]"><PanelHead title="图纸管理" /></div>
        <DrawingGrid />
        <div className="mt-[11px]"><PanelHead title="CAD图层显示" close={false} /></div>
        <div className="flex flex-1 min-h-0 mt-px border-t border-x border-[#7f9db9] bg-white overflow-hidden">
          <div className="flex-1 min-w-0 overflow-hidden pl-[11px]">
            <div className="flex items-center h-[18px] pt-[3px]">
              <PlusBox />
              <span className="ml-[6px] w-[13px] h-[13px] border border-[#555] bg-[#f4f4f0] shrink-0" />
              <span className="ml-[3px] whitespace-nowrap translate-y-px">已提取的CAD图层</span>
            </div>
            <div className="flex items-center h-[15px]">
              <PlusBox />
              <span className="ml-[6px] flex items-center justify-center w-[13px] h-[13px] border border-[#555] bg-[#f4f4f0] shrink-0">
                <svg viewBox="0 0 10 10" width="10" height="10"><path d="M1 5L4 8L9 2" stroke="#1c9a2c" strokeWidth="2" fill="none" /></svg>
              </span>
              <span className="ml-[3px] whitespace-nowrap translate-y-px">CAD原始图层</span>
            </div>
          </div>
          <div className="w-[16px] flex flex-col justify-between bg-[#f6f5ef] mt-[2px]">
            <span className="flex items-center justify-center h-[13px] rounded-[2px] bg-[#c5d5f7] border border-[#a8bce8]">
              <svg viewBox="0 0 9 6" width="9" height="6"><path d="M1 5L4.5 1.5L8 5" stroke="#2c4c8c" strokeWidth="1.6" fill="none" /></svg>
            </span>
            <span className="flex items-center justify-center h-[13px] rounded-[2px] bg-[#c5d5f7] border border-[#a8bce8]">
              <svg viewBox="0 0 9 6" width="9" height="6"><path d="M1 1L4.5 4.5L8 1" stroke="#2c4c8c" strokeWidth="1.6" fill="none" /></svg>
            </span>
          </div>
        </div>
      </div>

      {/* tool bars and canvas */}
      <div className="flex-1 min-w-0 flex flex-col overflow-hidden">
        <ToolRow className="h-[21px]">
          <Grip />
          <Tool icon="del" label="删除" className="w-[50px] ml-[2px]" />
          <Sep />
          <Tool icon="copyc" label="复制" className="w-[52px]" />
          <Tool icon="mirror" label="镜像" className="w-[50px]" />
          <Sep />
          <Tool icon="move" label="移动" className="w-[52px]" />
          <Tool icon="rotate" label="旋转" className="w-[49px]" />
          <Sep />
          <Tool off icon="extend" label="延伸" className="w-[51px]" />
          <Tool off icon="trim" label="修剪" className="w-[50px]" />
          <Sep />
          <Tool off icon="breakk" label="打断" className="w-[51px]" />
          <Tool off icon="merge" label="合并" className="w-[51px]" />
          <Tool off icon="split" label="分割" className="w-[49px]" />
          <Sep />
          <Tool icon="align" label="对齐" className="ml-[2px]" />
        </ToolRow>
        <ToolRow className="h-[21px] mt-[5px] w-[570px]">
          <Grip />
          <Combo label={<>第<L>-1</L>层</>} className="w-[58px] -ml-px" />
          <Combo label="基础" className="w-[68px] ml-[3px]" />
          <Combo label="独立基础" className="w-[68px] ml-[3px]" />
          <Combo label={<L>DJ-1</L>} className="w-[68px] ml-[5px]" />
          <Combo label="整体" className="w-[70px] ml-[4px]" />
          <span className="w-px h-[15px] mx-[4px] bg-[#aca899]" />
          <span className="flex items-center gap-[3px] h-[22px] w-[50px] pl-[3px] border border-[#316ac5] bg-[#e6ebf2] shrink-0"><Ic n="attr" />属性</span>
          <span className="flex items-center gap-[3px] ml-[4px] w-[69px] shrink-0 whitespace-nowrap"><Ic n="rebar" />编辑钢筋</span>
          <span className="ml-auto mr-[5px] text-[10px] font-bold">»</span>
        </ToolRow>
        <ToolRow className="h-[24px] mt-[5px]">
          <Grip />
          <span className="flex items-center gap-[3px] h-[22px] w-[51px] pl-[3px] border border-[#316ac5] bg-[#e6ebf2] shrink-0 -ml-px"><Ic n="pointer" /><span className="translate-y-px">选择</span></span>
          <span className="ml-[2px] w-[9px] flex justify-center"><Caret /></span>
          <span className="w-px h-[15px] ml-[4px] mr-[6px] bg-[#aca899]" />
          <Tool icon="point" label="点" className="w-[38px] gap-[5px]" />
          <Tool icon="rotpoint" label="旋转点" className="w-[62px]" />
          <span className="w-px h-[15px] mr-[7px] bg-[#aca899]" />
          <Tool off icon="gline" label="直线" className="w-[51px]" />
          <Tool off icon="garc" label="三点画弧" className="w-[72px]" />
          <span className="ml-[4px] mr-[4px]"><Caret c="#a5a398" /></span>
          <span className="flex items-center justify-end w-[55px] h-[19px] ml-[1px] pr-[2px] border border-[#b5b3a6]"><Caret c="#a5a398" /></span>
          <Tool off icon="grect" label="矩形" className="ml-[5px] w-[48px]" />
          <span className="w-px h-[15px] mr-[5px] bg-[#aca899]" />
          <Tool icon="layout" label="智能布置" className="w-[72px]" />
          <Caret />
          <span className="w-px h-[15px] ml-[4px] mr-[5px] bg-[#aca899]" />
          <Tool off icon="adjust" label="调整钢筋" />
        </ToolRow>
        <div className="mt-px flex-1 bg-black">
          <svg width="580" height="663" viewBox="0 0 580 663" className="block">
            <path d="M550 67H580" stroke="#00e0e0" />
            <path d="M555 116H580M555 127H580" stroke="#00ff00" />
            <path d="M555 173H580M555 263H580" stroke="#e00000" />
            <path d="M555 596H580" stroke="#00ffff" />
            <path d="M579 277V339" stroke="#00ff00" />
            <path d="M554 389H557M554 401H557" stroke="#777" />
          </svg>
        </div>
        <div className="flex items-center h-[26px] mb-[4px] gap-[3px]">
          <ToolRow className="h-[26px] w-[209px]">
            <Grip />
            <Tool icon="ortho" label="正交" className="w-[48px] ml-[2px]" />
            <span className="flex items-center gap-[3px] h-[22px] w-[75px] pl-[2px] border border-[#316ac5] bg-[#e1e6ec] shrink-0 whitespace-nowrap"><Ic n="snap" /><span className="translate-y-px">对象捕捉</span></span>
            <span className="flex items-center gap-[3px] h-[22px] w-[75px] pl-[2px] border border-[#316ac5] bg-[#e1e6ec] shrink-0 -ml-px whitespace-nowrap"><Ic n="dyn" /><span className="translate-y-px">动态输入</span></span>
          </ToolRow>
          <ToolRow className="h-[26px] w-[262px]">
            <span className="ml-[1px]"><Grip /></span>
            <Tool icon="cross" label="交点" className="w-[47px] ml-[1px]" />
            <span className="flex items-center gap-[4px] h-[22px] w-[52px] pl-[1px] border border-[#316ac5] bg-[#e1e6ec] shrink-0"><Ic n="perp" /><span className="translate-y-px">垂点</span></span>
            <span className="flex items-center gap-[4px] h-[22px] w-[52px] pl-[1px] border border-[#316ac5] bg-[#e1e6ec] shrink-0"><Ic n="mid" /><span className="translate-y-px">中点</span></span>
            <Tool icon="vert" label="顶点" className="w-[50px] ml-[2px] gap-[4px]" />
            <Tool icon="coord" label="坐标" className="gap-[3px]" />
          </ToolRow>
          <ToolRow className="h-[26px] flex-1">
            <span className="ml-[1px]"><Grip /></span>
            <Combo label="不偏移" className="w-[58px]" />
            <span className="ml-[7px] text-[10px] text-[#9a9a90]">X=</span>
            <span className="ml-[3px] w-[20px] h-[18px] border border-[#b5b3a6]" />
          </ToolRow>
        </div>
      </div>
    </div>

    <div className="flex items-center h-[20px] gap-[2px] bg-[#ece9d8]">
      <StatusCell className="w-[132px]"><span className="text-[10px] -ml-[2px]">-6270 Y=-6865</span></StatusCell>
      <StatusCell className="w-[77px]">层高:<L>3.9m</L></StatusCell>
      <StatusCell className="w-[100px]">底标高:<L>-4.7m</L></StatusCell>
      <StatusCell className="w-[48px]"><L>0</L></StatusCell>
      <StatusCell className="flex-1">按鼠标左键指定第一个角点，或拾取构件图元</StatusCell>
    </div>

    <Dialog />
    <Annotations />
  </div>
);

export default App;
